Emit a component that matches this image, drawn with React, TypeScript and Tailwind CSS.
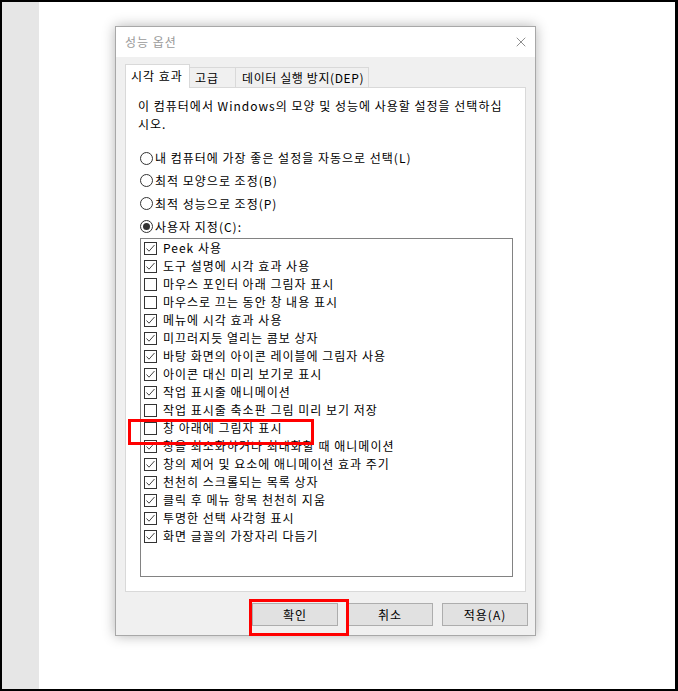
import { X } from "lucide-react";

const options: [string, boolean][] = [
  ["Peek 사용", true],
  ["도구 설명에 시각 효과 사용", true],
  ["마우스 포인터 아래 그림자 표시", false],
  ["마우스로 끄는 동안 창 내용 표시", false],
  ["메뉴에 시각 효과 사용", true],
  ["미끄러지듯 열리는 콤보 상자", true],
  ["바탕 화면의 아이콘 레이블에 그림자 사용", true],
  ["아이콘 대신 미리 보기로 표시", true],
  ["작업 표시줄 애니메이션", true],
  ["작업 표시줄 축소판 그림 미리 보기 저장", false],
  ["창 아래에 그림자 표시", false],
  ["창을 최소화하거나 최대화할 때 애니메이션", true],
  ["창의 제어 및 요소에 애니메이션 효과 주기", true],
  ["천천히 스크롤되는 목록 상자", true],
  ["클릭 후 메뉴 항목 천천히 지움", true],
  ["투명한 선택 사각형 표시", true],
  ["화면 글꼴의 가장자리 다듬기", true],
];

const radios = [
  "내 컴퓨터에 가장 좋은 설정을 자동으로 선택(L)",
  "최적 모양으로 조정(B)",
  "최적 성능으로 조정(P)",
  "사용자 지정(C):",
];

const Radio = ({ label, checked, first }: { label: string; checked: boolean; first: boolean }) => (
  <div className={`flex items-center gap-[2px] pl-[2px] ${first ? "h-[22px]" : "h-[23px]"}`}>
    <span className="w-[13px] h-[13px] rounded-full border border-[#333] bg-white flex items-center justify-center">
      {checked && <span className="w-[7px] h-[7px] rounded-full bg-[#333]" />}
    </span>
    <span>{label}</span>
  </div>
);

const Check = ({ checked }: { checked: boolean }) => (
  <span className="w-[13px] h-[13px] border border-[#333] bg-white flex-none">
    {checked && (
      <svg width="11" height="11" viewBox="0 0 11 11">
        <path d="M1.5 5.5 L4 8.2 L9.5 2" fill="none" stroke="#444" strokeWidth="1" />
      </svg>
    )}
  </span>
);

export default function App() {
  return (
    <div className="w-[678px] h-[691px] flex bg-white border-black border-t-2 border-l-2 border-b-2 border-r-[3px] font-['Noto_Sans_CJK_KR',sans-serif] text-[12px] leading-[18px] tracking-[1px] text-black">
      {/* page gutter */}
      <div className="w-[37px] bg-[#e6e6e6]" />
      <div className="flex-1 pl-[76px] pt-[24px]">
        <div className="relative w-[421px] h-[610px] border border-[#a8a8a8] bg-[#f0f0f0] shadow-[0_0_12px_rgba(0,0,0,0.3)] flex flex-col">
          {/* title bar */}
          <div className="h-[30px] bg-white flex items-center justify-between pl-[9px] pr-[6px]">
            <span className="text-[#9a9a9a] text-[12px]">성능 옵션</span>
            <X size={16} strokeWidth={1} className="text-[#555]" />
          </div>

          <div className="flex-1 pl-[9px] pr-[7px] pt-[7px] flex flex-col">
            {/* tabs */}
            <div className="h-[23px] flex items-end">
              <div className="relative z-10 w-[65px] h-[24px] -mb-px bg-white border-t border-l border-r border-[#d9d9d9] pl-[5px] leading-[22px]">
                시각 효과
              </div>
              <div className="w-[46px] h-[20px] border-t border-r border-[#d9d9d9] pl-[5px] leading-[19px]">고급</div>
              <div className="w-[133px] h-[20px] border-t border-r border-[#d9d9d9] pl-[6px] leading-[19px] tracking-[0.6px]">
                데이터 실행 방지(DEP)
              </div>
            </div>

            {/* panel */}
            <div className="w-[401px] h-[505px] bg-white border border-[#d9d9d9] pl-[12px] pt-[9px]">
              <p className="whitespace-nowrap">
                이 컴퓨터에서 Windows의 모양 및 성능에 사용할 설정을 선택하십
                <br />
                시오.
              </p>
              <div className="mt-[14px] flex flex-col">
                {radios.map((r, i) => (
                  <Radio key={r} label={r} checked={i === 3} first={i === 0} />
                ))}
              </div>
              <div className="ml-[2px] w-[373px] h-[339px] border border-[#828282] bg-white pl-[3px]">
                {options.map(([label, on]) => (
                  <div key={label} className="h-[18px] flex items-center gap-[6px]">
                    <Check checked={on} />
                    <span className="whitespace-nowrap">{label}</span>
                  </div>
                ))}
              </div>
            </div>

            {/* buttons */}
            <div className="mt-[11px] flex justify-end gap-[9px]">
              {["확인", "취소", "적용(A)"].map((b) => (
                <button
                  key={b}
                  className="w-[86px] h-[23px] bg-[#e1e1e1] border border-[#adadad] text-[12px] leading-[21px]"
                >
                  {b}
                </button>
              ))}
            </div>
          </div>

          {/* annotation boxes */}
          <div className="absolute left-[12px] top-[392px] w-[186px] h-[26px] border-[3px] border-[#ff0000]" />
          <div className="absolute left-[133px] top-[572px] w-[100px] h-[37px] border-[3px] border-[#ff0000]" />
        </div>
      </div>
    </div>
  );
}
